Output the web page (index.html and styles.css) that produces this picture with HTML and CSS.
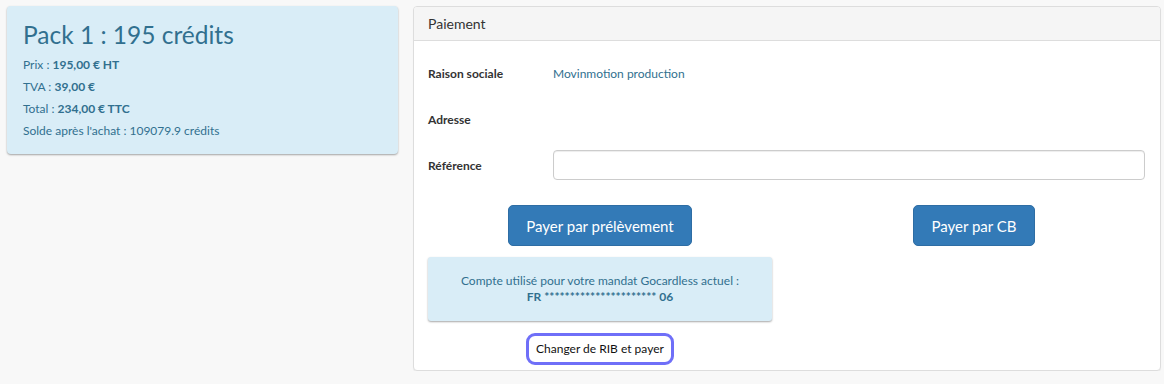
FILE: index.html
```html
<!DOCTYPE html>
<html lang="fr">
<head>
<meta charset="utf-8">
<link rel="stylesheet" href="styles.css">
</head>
<body>
<div class="page">
  <div class="pack">
    <h3 class="pack-title">Pack 1 : 195 crédits</h3>
    <p class="pack-line">Prix : <b>195,00 € HT</b></p>
    <p class="pack-line">TVA : <b>39,00 €</b></p>
    <p class="pack-line">Total : <b>234,00 € TTC</b></p>
    <p class="pack-line">Solde après l'achat : 109079.9 crédits</p>
  </div>
  <div class="panel">
    <div class="panel-heading">Paiement</div>
    <div class="panel-body">
      <div class="form-row"><span class="label">Raison sociale</span><span class="value">Movinmotion production</span></div>
      <div class="form-row"><span class="label">Adresse</span><span class="value"></span></div>
      <div class="form-row"><span class="label">Référence</span><input class="input" type="text"></div>
      <div class="cols">
        <div class="col">
          <button class="btn">Payer par prélèvement</button>
          <div class="info">Compte utilisé pour votre mandat Gocardless actuel :<br><b>FR ********************** 06</b></div>
          <a class="change">Changer de RIB et payer</a>
        </div>
        <div class="col">
          <button class="btn">Payer par CB</button>
        </div>
      </div>
    </div>
  </div>
</div>
</body>
</html>
```

FILE: styles.css
```css
html, body {
  margin: 0;
  padding: 0;
  background: #f8f8f8;
  font-family: Lato, "Open Sans", sans-serif;
  color: #333;
}
.page {
  display: flex;
  align-items: flex-start;
  gap: 15px;
  padding: 6px 0 0 7px;
}
.pack {
  width: 391px;
  box-sizing: border-box;
  height: 148px;
  background: #d9edf7;
  color: #31708f;
  border-radius: 4px;
  box-shadow: 0 1px 2px rgba(0,0,0,0.35);
  padding: 14px 16px 0;
}
.pack-title {
  margin: 0 0 4px;
  font-size: 24.5px;
  font-weight: 400;
  line-height: 30px;
}
.pack-line {
  margin: 0;
  font-size: 12px;
  line-height: 22px;
}
.panel {
  width: 748px;
  height: 365px;
  box-sizing: border-box;
  background: #fff;
  border: 1px solid #ddd;
  border-radius: 4px;
  box-shadow: 0 1px 1px rgba(0,0,0,0.05);
}
.panel-heading {
  background: #f5f5f5;
  border-bottom: 1px solid #ddd;
  border-radius: 3px 3px 0 0;
  height: 34px;
  box-sizing: border-box;
  padding: 9px 14px;
  font-size: 14px;
  line-height: 16px;
  color: #333;
}
.panel-body {
  padding: 17px 14px 0;
}
.form-row {
  display: flex;
  align-items: center;
  height: 30px;
  margin-bottom: 16px;
  font-size: 12px;
}
.form-row:last-of-type {
  margin-bottom: 0;
}
.label {
  width: 125px;
  font-weight: 700;
  color: #333;
}
.value {
  color: #31708f;
}
.input {
  flex: 1;
  height: 30px;
  box-sizing: border-box;
  border: 1px solid #ccc;
  border-radius: 4px;
  margin-right: 1px;
  box-shadow: inset 0 1px 1px rgba(0,0,0,0.075);
}
.cols {
  display: flex;
  margin: 25px -15px 0;
}
.col {
  flex: 1;
  padding: 0 15px;
  display: flex;
  flex-direction: column;
  align-items: center;
}
.btn {
  font-family: Lato, "Open Sans", sans-serif;
  font-size: 15px;
  height: 41px;
  padding: 0 17px;
  background: #337ab7;
  border: 1px solid #2e6da4;
  border-radius: 5px;
  color: #fff;
}
.info {
  align-self: stretch;
  margin-top: 11px;
  background: #d9edf7;
  color: #31708f;
  border-radius: 3px;
  box-shadow: 0 1px 2px rgba(0,0,0,0.35);
  text-align: center;
  font-size: 12px;
  line-height: 16px;
  padding: 16px 0;
}
.change {
  margin-top: 12px;
  font-size: 12px;
  line-height: 16px;
  color: #111;
  padding: 5px 7px;
  border: 3px solid #6f6ff8;
  border-radius: 9px;
}
```
